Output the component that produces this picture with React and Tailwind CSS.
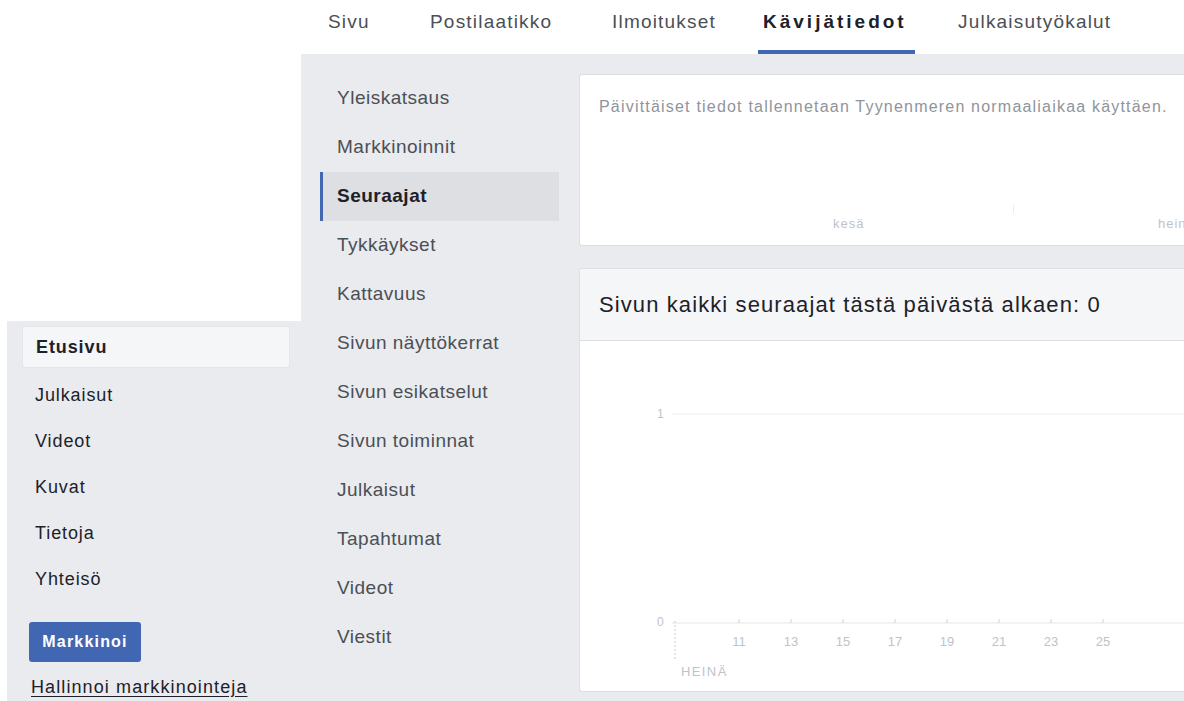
import React from 'react'

const tabs = [
  { label: 'Sivu', cls: 'w-[102px]' },
  { label: 'Postilaatikko', cls: 'w-[182px]' },
  { label: 'Ilmoitukset', cls: 'w-[151px]' },
  { label: 'Kävijätiedot', cls: 'w-[195px]', active: true },
  { label: 'Julkaisutyökalut', cls: 'w-[180px]' },
]

const pageNav = ['Etusivu', 'Julkaisut', 'Videot', 'Kuvat', 'Tietoja', 'Yhteisö']

const insightsNav = [
  'Yleiskatsaus',
  'Markkinoinnit',
  'Seuraajat',
  'Tykkäykset',
  'Kattavuus',
  'Sivun näyttökerrat',
  'Sivun esikatselut',
  'Sivun toiminnat',
  'Julkaisut',
  'Tapahtumat',
  'Videot',
  'Viestit',
]

const days = ['11', '13', '15', '17', '19', '21', '23', '25']

function TopTabs() {
  return (
    <div className="h-[54px] bg-white flex items-stretch pl-[328px]">
      {tabs.map((t) => (
        <div key={t.label} className={`${t.cls} shrink-0 flex items-stretch`}>
          <div
            className={`relative pt-[8px] text-[19px] ${
              t.active ? 'font-bold tracking-[3px] text-[#1d2129]' : 'tracking-[1.2px] text-[#4b4f56]'
            }`}
          >
            {t.label}
            {t.active && <div className="absolute left-[-5px] right-[-8px] bottom-0 h-[4px] bg-[#4267b2]" />}
          </div>
        </div>
      ))}
    </div>
  )
}

function PageNav() {
  return (
    <div className="ml-[7px] flex-1 bg-[#e9ebee] pt-[5px] pl-[15px] pr-[11px]">
      <div className="flex flex-col">
        {pageNav.map((item, i) => (
          <div
            key={item}
            className={
              i === 0
                ? 'h-[42px] flex items-center pl-[13px] bg-[#f5f6f7] border border-[#e3e5e8] rounded-[2px] text-[18px] tracking-[0.9px] font-bold text-[#1d2129] mb-[4px]'
                : 'h-[46px] flex items-center pl-[13px] text-[18px] tracking-[0.9px] text-[#1d2129]'
            }
          >
            {item}
          </div>
        ))}
      </div>
      <button className="mt-[20px] ml-[7px] w-[112px] h-[40px] rounded-[3px] bg-[#4267b2] text-white font-bold text-[16px] tracking-[1.2px]">
        Markkinoi
      </button>
      <div className="mt-[12px] ml-[9px] text-[18px] tracking-[1.1px] text-[#1d2129] underline underline-offset-[3px]">
        Hallinnoi markkinointeja
      </div>
    </div>
  )
}

function InsightsNav() {
  return (
    <div className="w-[278px] shrink-0 pt-[20px] pl-[19px] pr-[20px]">
      {insightsNav.map((item) => {
        const active = item === 'Seuraajat'
        return (
          <div
            key={item}
            className={`h-[49px] flex items-center text-[19px] tracking-[0.5px] ${
              active
                ? 'bg-[#dddfe2] border-l-[3px] border-[#4267b2] pl-[14px] font-bold text-[#1d2129]'
                : 'pl-[17px] text-[#4b4f56]'
            }`}
          >
            {item}
          </div>
        )
      })}
    </div>
  )
}

function TimezoneCard() {
  return (
    <div className="h-[172px] bg-white border border-[#dddfe2] rounded-l-[3px] border-r-0 flex flex-col overflow-hidden">
      <div className="pt-[20px] pl-[19px] text-[16px] tracking-[1.2px] text-[#90949c] whitespace-nowrap">
        Päivittäiset tiedot tallennetaan Tyynenmeren normaaliaikaa käyttäen.
      </div>
      <div className="mt-auto mb-[12px] relative h-[30px] text-[13px] tracking-[1px] text-[#bec3c9]">
        <span className="absolute left-[253px] bottom-0">kesä</span>
        <span className="absolute left-[433px] bottom-[20px] w-px h-[8px] bg-[#e9ebee]" />
        <span className="absolute left-[578px] bottom-0 whitespace-nowrap">heinä</span>
      </div>
    </div>
  )
}

function FollowersChart() {
  return (
    <svg width="606" height="350" className="block" style={{ fontFamily: '"Liberation Sans", Arial, sans-serif' }}>
      <text x="77" y="77" fontSize="12" fill="#bec3c9">1</text>
      <line x1="92" y1="73" x2="606" y2="73" stroke="#eceef1" strokeWidth="1" />
      <text x="77" y="285" fontSize="12" fill="#bec3c9">0</text>
      <line x1="92" y1="282" x2="606" y2="282" stroke="#e4e6ea" strokeWidth="1" />
      <line x1="95" y1="280" x2="95" y2="318" stroke="#c9ccd1" strokeWidth="1" strokeDasharray="2 2" />
      {days.map((d, i) => {
        const x = 159 + i * 52
        return (
          <g key={d}>
            <line x1={x} y1="278" x2={x} y2="282" stroke="#d0d3d8" strokeWidth="1" />
            <text x={x} y="305" fontSize="13" fill="#bec3c9" textAnchor="middle">{d}</text>
          </g>
        )
      })}
      <text x="101" y="335" fontSize="13" letterSpacing="1.4" fill="#bec3c9">HEINÄ</text>
    </svg>
  )
}

function FollowersCard() {
  return (
    <div className="mt-[22px] bg-white border border-[#dddfe2] border-r-0 rounded-l-[3px] overflow-hidden">
      <div className="h-[72px] bg-[#f5f6f7] border-b border-[#dddfe2] flex items-center pl-[19px] text-[22px] tracking-[1.1px] text-[#1d2129] whitespace-nowrap">
        Sivun kaikki seuraajat tästä päivästä alkaen: 0
      </div>
      <FollowersChart />
    </div>
  )
}

export default function App() {
  return (
    <div
      className="w-[1184px] h-[701px] overflow-hidden bg-white flex flex-col"
      style={{ fontFamily: '"Liberation Sans", Arial, Helvetica, sans-serif' }}
    >
      <TopTabs />
      <div className="flex flex-1 min-h-0">
        <div className="w-[301px] shrink-0 flex flex-col">
          <div className="h-[268px] bg-white" />
          <PageNav />
        </div>
        <div className="flex-1 bg-[#e9ebee] flex min-w-0">
          <InsightsNav />
          <div className="flex-1 min-w-0 pt-[20px]">
            <TimezoneCard />
            <FollowersCard />
          </div>
        </div>
      </div>
    </div>
  )
}
